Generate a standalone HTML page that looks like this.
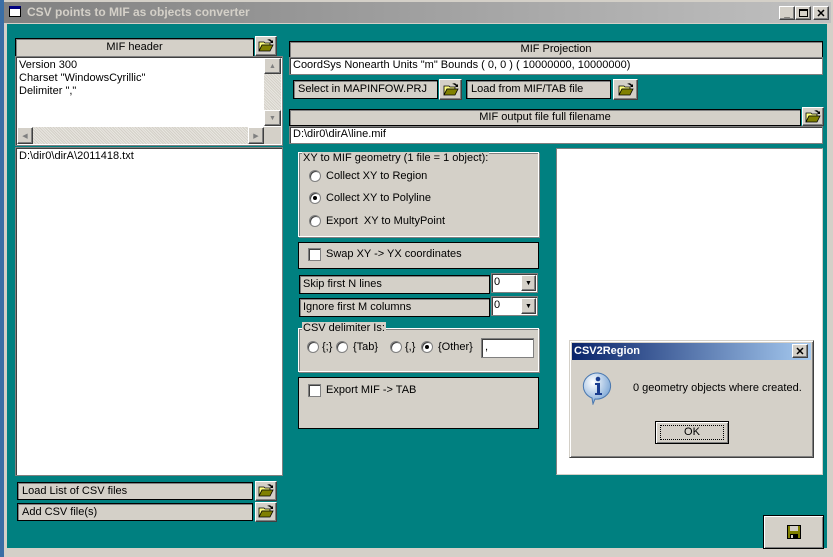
<!DOCTYPE html>
<html><head><meta charset="utf-8"><style>
*{box-sizing:border-box;margin:0;padding:0}
body{width:833px;height:557px;overflow:hidden;background:#d4d0c8;position:relative;font-family:"Liberation Sans",sans-serif;font-size:11px;color:#000}
.a{position:absolute}
.lbl{position:absolute;background:#d4d0c8;border:1px solid #000;box-shadow:inset 1px 1px 0 #808080;line-height:16px;padding-left:4px;white-space:nowrap}
.c{text-align:center;padding:0}
.wh{position:absolute;background:#fff;border:1px solid #808080;box-shadow:inset 1px 1px 0 #404040;padding:2px 3px;line-height:12px;white-space:nowrap}
.btn{position:absolute;background:#d4d0c8;border:1px solid;border-color:#fff #404040 #404040 #fff;box-shadow:inset -1px -1px 0 #808080;display:flex;align-items:center;justify-content:center}
.grp{position:absolute;background:#d4d0c8;border:1px solid #000}
.rad{position:absolute;width:12px;height:12px;border-radius:50%;background:#fff;border:1px solid #808080;box-shadow:inset 1px 1px 0 #404040}
.rad.on::after{content:"";position:absolute;left:3px;top:3px;width:4px;height:4px;border-radius:50%;background:#000}
.chk{position:absolute;width:13px;height:13px;background:#fff;border:1px solid #808080;box-shadow:inset 1px 1px 0 #404040}
.t{position:absolute;white-space:nowrap;line-height:13px}
</style></head><body>
<svg width="0" height="0" style="position:absolute"><defs><symbol id="fo" viewBox="0 0 16 16"><path d="M1 4h5l1 1h5v2H4L1 13z" fill="#ffff80" stroke="#000" stroke-width=".8"/><path d="M1 13L4 7h11l-3 6z" fill="#808000" stroke="#000" stroke-width=".8"/><path d="M9 2q3-2 5 1l1-1v3h-3l1-1q-2-2-4-2" fill="#000"/></symbol></defs></svg>
<div class="a" style="left:0;top:0;width:4px;height:557px;background:#3a6ea5"></div>
<div class="a" style="left:4px;top:2px;width:827px;height:21px;background:linear-gradient(90deg,#808080,#c0c0c0)"></div>
<div class="t" style="left:9px;top:6px;width:12px;height:11px;background:#fff;border:1px solid #000;border-top:3px solid #000080"></div>
<div class="t" style="left:27px;top:6px;color:#d4d0c8;font-weight:bold;font-size:12px">CSV points to MIF as objects converter</div>
<div class="btn" style="left:779px;top:6px;width:16px;height:14px;font-size:10px;font-weight:bold;align-items:flex-end">_</div>
<div class="btn" style="left:795px;top:6px;width:16px;height:14px"><div style="width:9px;height:8px;border:1px solid #000;border-top-width:2px"></div></div>
<div class="btn" style="left:813px;top:6px;width:16px;height:14px;font-weight:bold;font-size:11px">✕</div>
<div class="a" style="left:7px;top:24px;width:820px;height:524px;background:#008080"></div>

<div class="lbl c" style="left:15px;top:38px;width:239px;height:19px;line-height:16px">MIF header</div>
<div class="btn" style="left:255px;top:36px;width:22px;height:20px"><svg width="16" height="16"><use href="#fo"/></svg></div>
<div class="wh" style="left:15px;top:56px;width:268px;height:90px;padding-top:2px;line-height:13px">Version 300<br>Charset "WindowsCyrillic"<br>Delimiter ","</div>
<div class="a" style="left:264px;top:58px;width:17px;height:68px;background:repeating-linear-gradient(45deg,#e8e6e0 0 1px,#d4d0c8 1px 2px)"></div>
<div class="btn" style="left:264px;top:58px;width:17px;height:16px;font-size:7px;color:#808080">▲</div>
<div class="btn" style="left:264px;top:110px;width:17px;height:16px;font-size:7px;color:#808080">▼</div>
<div class="a" style="left:17px;top:127px;width:247px;height:17px;background:repeating-linear-gradient(45deg,#e8e6e0 0 1px,#d4d0c8 1px 2px)"></div>
<div class="btn" style="left:17px;top:127px;width:16px;height:17px;font-size:7px;color:#808080">◀</div>
<div class="btn" style="left:248px;top:127px;width:16px;height:17px;font-size:7px;color:#808080">▶</div>
<div class="a" style="left:264px;top:127px;width:17px;height:17px;background:#d4d0c8"></div>
<div class="wh" style="left:15px;top:147px;width:268px;height:329px;line-height:15px;padding-top:1px">D:\dir0\dirA\2011418.txt</div>

<div class="lbl" style="left:17px;top:482px;width:236px;height:18px">Load List of CSV files</div>
<div class="btn" style="left:255px;top:481px;width:22px;height:20px"><svg width="16" height="16"><use href="#fo"/></svg></div>
<div class="lbl" style="left:17px;top:503px;width:236px;height:18px">Add CSV file(s)</div>
<div class="btn" style="left:255px;top:502px;width:22px;height:20px"><svg width="16" height="16"><use href="#fo"/></svg></div>

<div class="lbl c" style="left:289px;top:41px;width:534px;height:17px;line-height:15px">MIF Projection</div>
<div class="wh" style="left:289px;top:57px;width:534px;height:18px;padding-top:1px">CoordSys Nonearth Units "m" Bounds ( 0, 0 ) ( 10000000, 10000000)</div>
<div class="lbl" style="left:293px;top:80px;width:145px;height:19px">Select in MAPINFOW.PRJ</div>
<div class="btn" style="left:439px;top:79px;width:23px;height:21px"><svg width="16" height="16"><use href="#fo"/></svg></div>
<div class="lbl" style="left:466px;top:80px;width:145px;height:19px">Load from MIF/TAB file</div>
<div class="btn" style="left:613px;top:79px;width:25px;height:21px"><svg width="16" height="16"><use href="#fo"/></svg></div>
<div class="lbl c" style="left:289px;top:109px;width:512px;height:17px;line-height:15px">MIF output file full filename</div>
<div class="btn" style="left:802px;top:107px;width:22px;height:19px"><svg width="16" height="16"><use href="#fo"/></svg></div>
<div class="wh" style="left:289px;top:126px;width:534px;height:18px;padding-top:1px">D:\dir0\dirA\line.mif</div>

<div class="grp" style="left:298px;top:152px;width:241px;height:85px;border-color:#fff;box-shadow:inset 1px 1px 0 #808080,1px 1px 0 #808080"></div>
<div class="t" style="left:302px;top:152px;background:#d4d0c8;padding:0 1px">XY to MIF geometry (1 file = 1 object):</div>
<div class="rad" style="left:309px;top:170px"></div><div class="t" style="left:326px;top:170px">Collect XY to Region</div>
<div class="rad on" style="left:309px;top:192px"></div><div class="t" style="left:326px;top:192px">Collect XY to Polyline</div>
<div class="rad" style="left:309px;top:215px"></div><div class="t" style="left:326px;top:215px">Export &nbsp;XY to MultyPoint</div>

<div class="grp" style="left:298px;top:242px;width:241px;height:27px"></div>
<div class="chk" style="left:308px;top:248px"></div><div class="t" style="left:326px;top:248px">Swap XY -&gt; YX coordinates</div>

<div class="lbl" style="left:299px;top:275px;width:191px;height:19px;padding-left:3px">Skip first N lines</div>
<div class="wh" style="left:491px;top:273px;width:47px;height:20px;padding:2px 2px">0</div>
<div class="btn" style="left:521px;top:275px;width:15px;height:16px;font-size:7px">▼</div>
<div class="lbl" style="left:299px;top:298px;width:191px;height:19px;padding-left:3px">Ignore first M columns</div>
<div class="wh" style="left:491px;top:296px;width:47px;height:20px;padding:2px 2px">0</div>
<div class="btn" style="left:521px;top:298px;width:15px;height:16px;font-size:7px">▼</div>

<div class="grp" style="left:298px;top:328px;width:241px;height:44px;border-color:#fff;box-shadow:inset 1px 1px 0 #808080,1px 1px 0 #808080"></div>
<div class="t" style="left:302px;top:322px;background:#d4d0c8;padding:0 1px">CSV delimiter Is:</div>
<div class="rad" style="left:307px;top:341px"></div><div class="t" style="left:322px;top:341px">{;}</div>
<div class="rad" style="left:336px;top:341px"></div><div class="t" style="left:353px;top:341px">{Tab}</div>
<div class="rad" style="left:390px;top:341px"></div><div class="t" style="left:405px;top:341px">{,}</div>
<div class="rad on" style="left:421px;top:341px"></div><div class="t" style="left:438px;top:341px">{Other}</div>
<div class="wh" style="left:481px;top:338px;width:53px;height:20px">,</div>

<div class="grp" style="left:298px;top:377px;width:241px;height:52px"></div>
<div class="chk" style="left:308px;top:384px"></div><div class="t" style="left:326px;top:384px">Export MIF -&gt; TAB</div>

<div class="a" style="left:556px;top:148px;width:267px;height:327px;background:#fff;border:1px solid;border-color:#808080 #d4d0c8 #d4d0c8 #808080"></div>

<div class="a" style="left:569px;top:340px;width:245px;height:118px;background:#d4d0c8;border:1px solid;border-color:#d4d0c8 #404040 #404040 #d4d0c8;box-shadow:inset 1px 1px 0 #fff,inset -1px -1px 0 #808080"></div>
<div class="a" style="left:572px;top:343px;width:239px;height:17px;background:linear-gradient(90deg,#0a246a,#a6caf0)"></div>
<div class="t" style="left:574px;top:345px;color:#fff;font-weight:bold;font-size:11px">CSV2Region</div>
<div class="btn" style="left:792px;top:344px;width:16px;height:14px;font-weight:bold;font-size:11px">✕</div>
<svg class="a" style="left:582px;top:371px" width="34" height="34" viewBox="0 0 34 34"><defs><radialGradient id="g" cx=".35" cy=".3" r=".8"><stop offset="0" stop-color="#fff"/><stop offset="1" stop-color="#6a9ad0"/></radialGradient></defs><path d="M16 2a14 13 0 1 1-3 26l-2 5-1-6A14 13 0 0 1 16 2z" fill="url(#g)" stroke="#4a78b0"/><circle cx="16" cy="8" r="2.3" fill="#1a3d8f"/><path d="M13 12h5v10h2v2h-7v-2h2v-8h-2z" fill="#1a3d8f"/></svg>
<div class="t" style="left:633px;top:382px">0 geometry objects where created.</div>
<div class="a" style="left:655px;top:421px;width:74px;height:23px;border:1px solid #000;background:#d4d0c8;box-shadow:inset 1px 1px 0 #fff,inset -1px -1px 0 #808080"></div>
<div class="a" style="left:660px;top:425px;width:64px;height:15px;border:1px dotted #000;text-align:center;line-height:13px">OK</div>

<div class="a" style="left:763px;top:515px;width:61px;height:34px;border:1px solid #000;background:#d4d0c8;box-shadow:inset 1px 1px 0 #fff,inset -1px -1px 0 #808080;display:flex;align-items:center;justify-content:center"><svg width="14" height="14" viewBox="0 0 14 14"><rect x=".5" y=".5" width="13" height="13" fill="#808000" stroke="#000"/><rect x="3" y="1" width="8" height="5" fill="#d4d0c8"/><rect x="3" y="9" width="8" height="4" fill="#000"/><rect x="4" y="10" width="2" height="3" fill="#d4d0c8"/></svg></div>
</body></html>
